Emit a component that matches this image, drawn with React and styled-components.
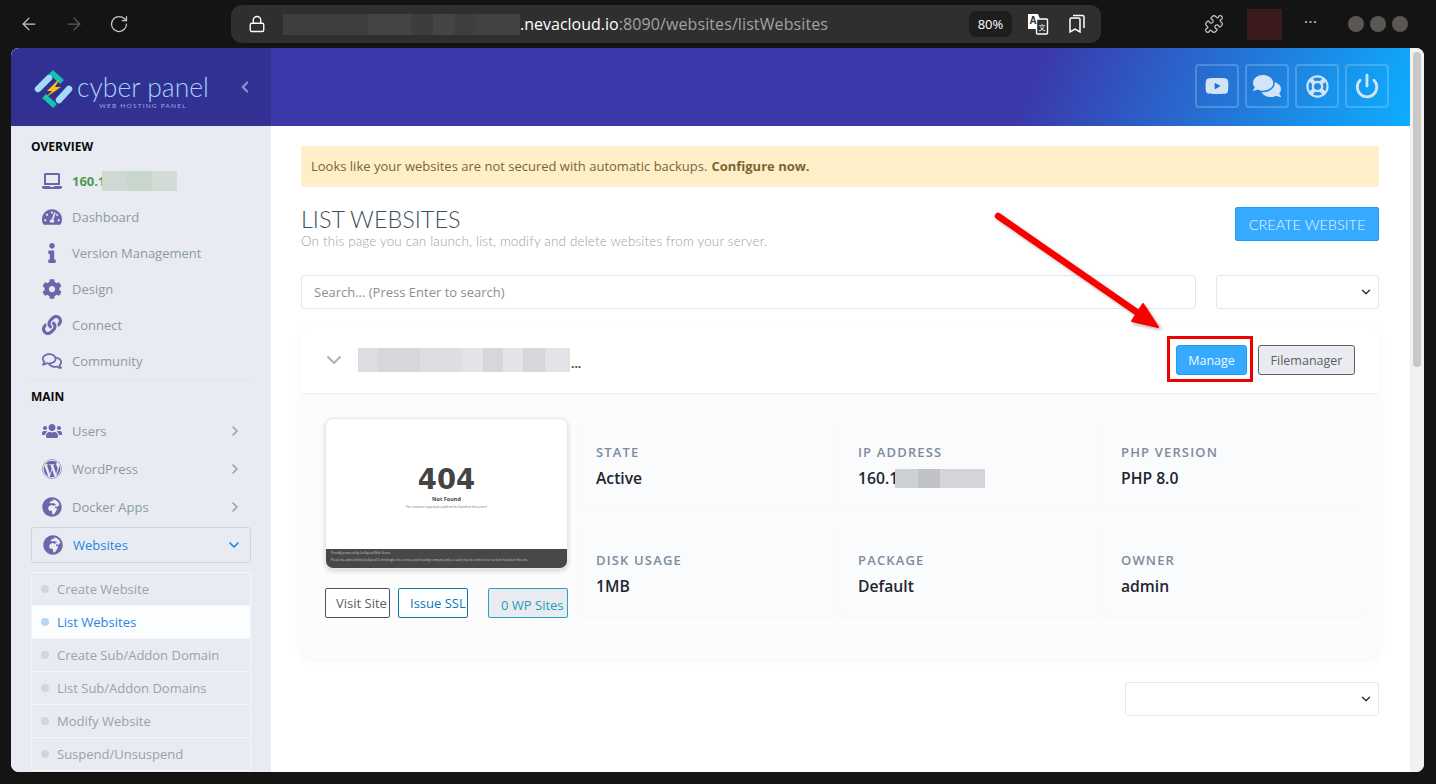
import React from "react";
import styled, { createGlobalStyle } from "styled-components";
import { ArrowLeft, ArrowRight, RotateCw, Lock, Puzzle, ChevronDown, ChevronRight, ChevronLeft, Power } from "lucide-react";
import {
  FaLaptop,
  FaTachometerAlt,
  FaInfo,
  FaCog,
  FaLink,
  FaRegComments,
  FaUsers,
  FaWordpress,
  FaGlobeAfrica,
  FaYoutube,
  FaComments,
  FaRegLifeRing,
} from "react-icons/fa";

const GlobalStyle = createGlobalStyle`
  html, body {
    margin: 0;
    padding: 0;
    height: 100%;
    background: #141414;
    overflow: hidden;
  }
  * { box-sizing: border-box; }
`;

const Screen = styled.div`
  position: relative;
  width: 1436px;
  height: 784px;
  background: #141414;
  font-family: "Open Sans", "Liberation Sans", sans-serif;
  overflow: hidden;
`;

/* browser chrome */
const Toolbar = styled.div`
  height: 48px;
  display: flex;
  align-items: center;
  padding: 0 24px 0 19px;
`;

const NavButton = styled.div`
  width: 20px;
  display: flex;
  justify-content: center;
  color: ${(p) => (p.$off ? "#5c5c5c" : "#c6c6c6")};
  margin-right: ${(p) => p.$gap || 0}px;
`;

const AddressBar = styled.div`
  width: 870px;
  height: 38px;
  margin-left: 102px;
  margin-right: 103px;
  flex-shrink: 0;
  border-radius: 11px;
  background: #2f2f2f;
  display: flex;
  align-items: center;
  padding: 0 15px 0 17px;
  color: #fff;
`;

const Url = styled.div`
  display: flex;
  align-items: center;
  margin-left: 17px;
  font-size: 16px;
  flex: 1;
  min-width: 0;
`;

const UrlDim = styled.span`
  color: #a3a3a3;
  letter-spacing: 0.1px;
`;

const Blur = styled.div`
  display: flex;
  flex-shrink: 0;
  height: ${(p) => p.$h}px;
  margin-left: ${(p) => p.$ml || 0}px;
`;

const BlurCell = styled.div`
  width: ${(p) => p.$w}px;
  background: ${(p) => p.$c};
`;

const Zoom = styled.div`
  width: 43px;
  height: 26px;
  border-radius: 7px;
  background: #1d1d1d;
  font-size: 13px;
  display: flex;
  align-items: center;
  justify-content: center;
  margin-right: 15px;
`;

const BarIcon = styled.svg`
  display: block;
  margin-right: ${(p) => p.$gap || 0}px;
`;

const ToolbarRight = styled.div`
  display: flex;
  align-items: center;
  color: #c6c6c6;
`;

const ProfileBlock = styled.div`
  width: 35px;
  height: 31px;
  background: #3a1a1a;
  margin: 0 21px 0 23px;
`;

const Dots = styled.div`
  width: 16px;
  text-align: center;
  font-size: 12px;
  letter-spacing: 1px;
  font-weight: 700;
  color: #bdbdbd;
  margin-right: 29px;
  transform: translateY(-3px);
`;

const Avatars = styled.div`
  display: flex;
  gap: 6px;
`;

const Avatar = styled.div`
  width: 16px;
  height: 16px;
  flex-shrink: 0;
  border-radius: 50%;
  background: #5b5754;
`;

/* page viewport */
const Viewport = styled.div`
  display: flex;
  width: 1413px;
  height: 724px;
  margin-left: 11px;
  border-radius: 8px;
  overflow: hidden;
  background: #fff;
`;

const Sidebar = styled.aside`
  width: 260px;
  flex-shrink: 0;
  background: #e9ebf2;
  overflow: hidden;
`;

const LogoBar = styled.div`
  height: 78px;
  background: #303193;
  display: flex;
  align-items: center;
  padding-left: 17px;
`;

const LogoMark = styled.svg`
  display: block;
  flex-shrink: 0;
  margin-top: 4px;
`;

const LogoText = styled.div`
  margin-left: -1px;
  color: #a6d2f6;
  font-family: "Lato", "Open Sans", sans-serif;
  font-weight: 300;
  font-size: 26.5px;
  line-height: 29px;
  display: flex;
  flex-direction: column;
  align-items: center;
  padding-top: 8px;
`;

const LogoSub = styled.span`
  font-size: 6.5px;
  line-height: 8px;
  letter-spacing: 1.2px;
  font-weight: 400;
  color: #9ea7dc;
`;

const Collapse = styled.div`
  margin-left: auto;
  margin-right: 17px;
  color: #8d8fcb;
  display: flex;
`;

const Nav = styled.nav`
  padding: 13px 20px 0;
`;

const NavHeading = styled.div`
  font-size: 12px;
  font-weight: 700;
  color: #0a0a0a;
  line-height: 16px;
  margin-bottom: ${(p) => p.$gap || 0}px;
`;

const NavItem = styled.div`
  height: ${(p) => p.$h || 36}px;
  display: flex;
  align-items: center;
  font-size: 13px;
  color: ${(p) => p.$color || "#8b9aa8"};
  font-weight: ${(p) => (p.$bold ? 700 : 400)};
  padding-right: 8px;
`;

const NavIcon = styled.span`
  width: 41px;
  flex-shrink: 0;
  display: flex;
  justify-content: center;
  color: #6a67ab;
  font-size: 20px;
`;

const NavArrow = styled.span`
  margin-left: auto;
  display: flex;
  color: ${(p) => p.$color || "#8b9aa8"};
`;

const NavDivider = styled.div`
  height: 1px;
  background: #dfe6f1;
  margin: 1px 0 8px;
`;

const ActiveItem = styled(NavItem)`
  height: 36px;
  margin-top: 1px;
  border: 1px solid #cdd5de;
  border-radius: 3px;
  color: #2486e3;
`;

const SubMenu = styled.div`
  margin-top: 9px;
  border: 1px solid #f5f6f9;
  border-bottom: none;
  border-radius: 3px;
`;

const SubItem = styled.div`
  height: 33px;
  display: flex;
  align-items: center;
  gap: 8px;
  padding-left: 9px;
  font-size: 13px;
  color: ${(p) => (p.$active ? "#2486e3" : "#97a3ae")};
  background: ${(p) => (p.$active ? "#fcfdff" : "transparent")};
  border-bottom: 1px solid #f5f6f9;
`;

const SubDot = styled.span`
  width: 8px;
  height: 8px;
  border-radius: 50%;
  background: ${(p) => (p.$active ? "#b4d8f8" : "#d0d6de")};
`;

const Content = styled.div`
  flex: 1;
  min-width: 0;
  display: flex;
  flex-direction: column;
`;

const TopBar = styled.div`
  height: 78px;
  flex-shrink: 0;
  background: linear-gradient(112deg, #3b38ab 0%, #3b38ab 66%, #0daeff 100%);
  display: flex;
  justify-content: flex-end;
  align-items: center;
  gap: 6px;
  padding: 0 21px 2px 0;
`;

const TopButton = styled.div`
  width: 44px;
  height: 44px;
  border: 2px solid rgba(255, 255, 255, 0.2);
  border-radius: 4px;
  display: flex;
  align-items: center;
  justify-content: center;
  color: #d3e4f8;
  font-size: ${(p) => p.$size}px;
`;

const Main = styled.main`
  flex: 1;
  padding: 20px 31px 0 30px;
  background: #fff;
`;

const Alert = styled.div`
  height: 41px;
  background: #ffefc8;
  border-radius: 3px;
  color: #7b6532;
  font-size: 13px;
  display: flex;
  align-items: center;
  padding: 0 0 1px 10px;
  gap: 4px;
`;

const AlertLink = styled.b`
  font-weight: 700;
`;

const TitleRow = styled.div`
  display: flex;
  justify-content: space-between;
  margin-top: 20px;
`;

const Title = styled.h1`
  margin: 0;
  font-family: "Lato", "Open Sans", sans-serif;
  font-weight: 300;
  font-size: 23.4px;
  line-height: 24px;
  color: #3f4f60;
`;

const Subtitle = styled.p`
  margin: 2px 0 0;
  font-family: "Lato", "Open Sans", sans-serif;
  font-weight: 300;
  font-size: 13.4px;
  letter-spacing: 0.18px;
  line-height: 17px;
  color: #989fa7;
`;

const CreateButton = styled.button`
  width: 144px;
  height: 34px;
  background: #36aaff;
  border: 1px solid #1f9df5;
  border-radius: 2px;
  color: #eaf6ff;
  font-family: "Lato", "Open Sans", sans-serif;
  font-weight: 300;
  font-size: 14.5px;
`;

const SearchRow = styled.div`
  display: flex;
  gap: 20px;
  margin-top: 25px;
`;

const SearchBox = styled.div`
  flex: 1;
  height: 34px;
  border: 1px solid #dfe7f2;
  border-radius: 3px;
  display: flex;
  align-items: center;
  padding-left: 12px;
  font-size: 13px;
  color: #8a8f95;
`;

const SelectBox = styled.div`
  width: ${(p) => p.$w}px;
  height: 34px;
  border: 1px solid #dfe7f2;
  border-radius: 3px;
  background: #fff;
  display: flex;
  align-items: center;
  justify-content: flex-end;
  padding-right: 5px;
  color: #333;
`;

const Card = styled.section`
  margin-top: 18px;
  height: 331px;
  background: #fcfcfd;
  border-radius: 10px;
  box-shadow: 0 2px 10px rgba(30, 50, 90, 0.05);
  overflow: hidden;
`;

const CardHeader = styled.div`
  height: 67px;
  display: flex;
  align-items: center;
  background: #fff;
  border-bottom: 1px solid #eaeef4;
  padding: 0 24px 0 21px;
`;

const Toggle = styled.span`
  display: flex;
  color: #aeb1b6;
  margin-right: 12px;
`;

const Ellipsis = styled.span`
  font-size: 12px;
  font-weight: 700;
  color: #444;
  margin-left: 1px;
  transform: translateY(3px);
`;

const HeaderActions = styled.div`
  margin-left: auto;
  display: flex;
  gap: 11px;
`;

const SmallButton = styled.button`
  height: 30px;
  width: ${(p) => p.$w}px;
  border-radius: 3px;
  font-family: "Open Sans", sans-serif;
  font-size: 12.5px;
  padding: 0;
  background: ${(p) => (p.$primary ? "#36aaff" : "#e9ebf1")};
  border: 1px solid ${(p) => (p.$primary ? "#1f9df5" : "#5b6066")};
  color: ${(p) => (p.$primary ? "#eef8ff" : "#595f66")};
`;

const CardBody = styled.div`
  display: flex;
  padding: 24px 13px 0 24px;
  gap: 9px;
`;

const PreviewCol = styled.div`
  width: 243px;
  flex-shrink: 0;
`;

const Preview = styled.div`
  height: 151px;
  background: #fff;
  border-radius: 8px;
  border: 1px solid #e8e8e8;
  box-shadow: 0 2px 5px rgba(0, 0, 0, 0.16);
  display: flex;
  flex-direction: column;
  overflow: hidden;
`;

const PreviewMain = styled.div`
  flex: 1;
  display: flex;
  flex-direction: column;
  align-items: center;
  justify-content: center;
  color: #444;
  padding-top: 6px;
`;

const Big404 = styled.div`
  font-family: "DejaVu Sans", sans-serif;
  font-weight: 700;
  font-size: 27.5px;
  line-height: 30px;
`;

const NotFound = styled.div`
  font-size: 5.5px;
  font-weight: 700;
  line-height: 10px;
`;

const Tiny = styled.div`
  font-size: 3px;
  line-height: 7px;
  color: ${(p) => p.$color || "#666"};
`;

const PreviewFoot = styled.div`
  height: 19px;
  background: #484848;
  padding: 1px 5px;
`;

const PreviewActions = styled.div`
  display: flex;
  margin-top: 19px;
  align-items: flex-start;
`;

const OutlineButton = styled.button`
  height: 30px;
  width: ${(p) => p.$w}px;
  margin-left: ${(p) => p.$ml || 0}px;
  border-radius: 2px;
  background: ${(p) => p.$bg || "#fff"};
  border: 1px solid ${(p) => p.$c};
  color: ${(p) => p.$text || p.$c};
  font-family: "Open Sans", sans-serif;
  font-size: 13px;
  text-align: left;
  padding: ${(p) => p.$pad};
  white-space: nowrap;
`;

const StatGrid = styled.div`
  flex: 1;
  display: grid;
  grid-template-columns: 261px 262px 263px;
  grid-template-rows: 90px 90px;
  column-gap: 1px;
  row-gap: 18px;
`;

const Stat = styled.div`
  background: #fafbfd;
  border-radius: 5px;
  box-shadow: 0 1px 3px rgba(30, 50, 90, 0.03);
  padding: 26px 18px 0 19px;
`;

const StatLabel = styled.div`
  font-size: 13px;
  font-weight: 600;
  letter-spacing: 1.15px;
  line-height: 16px;
  color: #7f8b9b;
`;

const StatValue = styled.div`
  display: flex;
  align-items: center;
  margin-top: 8px;
  font-size: 15.7px;
  font-weight: 600;
  line-height: 20px;
  color: #23262f;
`;

const BottomRow = styled.div`
  display: flex;
  justify-content: flex-end;
  margin-top: 24px;
`;

const Scrollbar = styled.div`
  width: 14px;
  flex-shrink: 0;
  background: #f1f1f1;
  padding: 4px 3px;
`;

const Thumb = styled.div`
  height: 315px;
  border-radius: 4px;
  background: #c8c8c8;
`;

/* annotation drawn over the screenshot */
const RedBox = styled.div`
  position: absolute;
  left: 1167px;
  top: 336px;
  width: 86px;
  height: 46px;
  border: 3px solid #f00000;
`;

const ArrowLayer = styled.svg`
  position: absolute;
  left: 980px;
  top: 200px;
  overflow: visible;
`;

const Cells = ({ cells, h, ml }) => (
  <Blur $h={h} $ml={ml}>
    {cells.map(([w, c], i) => (
      <BlurCell key={i} $w={w} $c={c} />
    ))}
  </Blur>
);

const Logo = () => (
  <LogoMark width="50" height="50" viewBox="0 0 50 50" fill="none">
    <path d="M23 8 L34 18" stroke="#13c4b0" strokeWidth="5.5" />
    <path d="M16 32 L27 42" stroke="#13c4b0" strokeWidth="5.5" />
    <path d="M10 25 L21 14" stroke="#a6d8f8" strokeWidth="6.5" strokeLinecap="round" />
    <path d="M41 25 L31 36" stroke="#a6d8f8" strokeWidth="6.5" strokeLinecap="round" />
    <path d="M30 16 L19 27 L24 27 L17 34 L33 23 L27 23 L31 16 Z" fill="#ffc20e" />
  </LogoMark>
);

const TranslateIcon = () => (
  <BarIcon width="22" height="22" viewBox="0 0 22 22" $gap={19}>
    <path d="M1 1h10l2 5v10H1z" fill="#fff" />
    <rect x="9.5" y="6" width="11" height="15" rx="1" fill="#2f2f2f" stroke="#fff" strokeWidth="1.4" />
    <text x="2.5" y="11" fontSize="10" fontWeight="700" fill="#2f2f2f" fontFamily="Liberation Sans">A</text>
    <text x="11.5" y="17" fontSize="7" fill="#fff" fontFamily="Noto Sans CJK SC">文</text>
  </BarIcon>
);

const CollectionsIcon = () => (
  <BarIcon width="18" height="20" viewBox="0 0 18 20" fill="none" stroke="#fff" strokeWidth="1.5">
    <path d="M2 5.5a1.5 1.5 0 0 1 1.5-1.5h7a1.5 1.5 0 0 1 1.5 1.5V18l-5-3-5 3z" />
    <path d="M5 1.5h9.5a1.5 1.5 0 0 1 1.5 1.5v11" />
  </BarIcon>
);

const overviewItems = [
  [FaTachometerAlt, "Dashboard"],
  [FaInfo, "Version Management"],
  [FaCog, "Design"],
  [FaLink, "Connect"],
  [FaRegComments, "Community"],
];

const mainItems = [
  [FaUsers, "Users"],
  [FaWordpress, "WordPress"],
  [FaGlobeAfrica, "Docker Apps"],
];

const subItems = [
  "Create Website",
  "List Websites",
  "Create Sub/Addon Domain",
  "List Sub/Addon Domains",
  "Modify Website",
  "Suspend/Unsuspend",
];

const stats = [
  ["STATE", "Active"],
  ["IP ADDRESS", "160.1", [[23, "#cdd0d4"], [22, "#c0c2c7"], [45, "#d3d5d9"]]],
  ["PHP VERSION", "PHP 8.0"],
  ["DISK USAGE", "1MB"],
  ["PACKAGE", "Default"],
  ["OWNER", "admin"],
];

export default function App() {
  return (
    <Screen>
      <GlobalStyle />
      <Toolbar>
        <NavButton $gap={25}><ArrowLeft size={20} strokeWidth={1.5} /></NavButton>
        <NavButton $off $gap={25}><ArrowRight size={20} strokeWidth={1.5} /></NavButton>
        <NavButton><RotateCw size={20} strokeWidth={1.5} /></NavButton>
        <AddressBar>
          <Lock size={18} strokeWidth={1.8} />
          <Url>
            <Cells h={21} cells={[[85, "#3f3f3f"], [43, "#444"], [22, "#3d3d3d"], [21, "#454545"], [21, "#3f3f3f"], [45, "#424242"]]} />
            <span>.nevacloud.io</span>
            <UrlDim>:8090/websites/listWebsites</UrlDim>
          </Url>
          <Zoom>80%</Zoom>
          <TranslateIcon />
          <CollectionsIcon />
        </AddressBar>
        <ToolbarRight>
          <Puzzle size={20} strokeWidth={1.5} />
          <ProfileBlock />
          <Dots>···</Dots>
          <Avatars>
            <Avatar />
            <Avatar />
            <Avatar />
          </Avatars>
        </ToolbarRight>
      </Toolbar>

      <Viewport>
        <Sidebar>
          <LogoBar>
            <Logo />
            <LogoText>
              cyber panel
              <LogoSub>WEB HOSTING PANEL</LogoSub>
            </LogoText>
            <Collapse><ChevronLeft size={18} strokeWidth={3} /></Collapse>
          </LogoBar>
          <Nav>
            <NavHeading $gap={8}>OVERVIEW</NavHeading>
            <NavItem $color="#4c9a52" $bold>
              <NavIcon><FaLaptop /></NavIcon>
              160.1
              <Cells h={20} ml={-3} cells={[[25, "#cdd9d2"], [25, "#c8d6cd"], [25, "#d0dcd5"]]} />
            </NavItem>
            {overviewItems.map(([Icon, label]) => (
              <NavItem key={label}>
                <NavIcon><Icon /></NavIcon>
                {label}
              </NavItem>
            ))}
            <NavDivider />
            <NavHeading $gap={7}>MAIN</NavHeading>
            {mainItems.map(([Icon, label]) => (
              <NavItem key={label} $h={38}>
                <NavIcon><Icon /></NavIcon>
                {label}
                <NavArrow><ChevronRight size={16} strokeWidth={2} /></NavArrow>
              </NavItem>
            ))}
            <ActiveItem>
              <NavIcon><FaGlobeAfrica /></NavIcon>
              Websites
              <NavArrow $color="#2486e3"><ChevronDown size={16} strokeWidth={2.5} /></NavArrow>
            </ActiveItem>
            <SubMenu>
              {subItems.map((label) => (
                <SubItem key={label} $active={label === "List Websites"}>
                  <SubDot $active={label === "List Websites"} />
                  {label}
                </SubItem>
              ))}
            </SubMenu>
          </Nav>
        </Sidebar>

        <Content>
          <TopBar>
            <TopButton $size={24}><FaYoutube /></TopButton>
            <TopButton $size={28}><FaComments /></TopButton>
            <TopButton $size={23}><FaRegLifeRing /></TopButton>
            <TopButton $size={26}><Power size={26} strokeWidth={2.6} /></TopButton>
          </TopBar>
          <Main>
            <Alert>
              Looks like your websites are not secured with automatic backups.
              <AlertLink>Configure now.</AlertLink>
            </Alert>
            <TitleRow>
              <div>
                <Title>LIST WEBSITES</Title>
                <Subtitle>On this page you can launch, list, modify and delete websites from your server.</Subtitle>
              </div>
              <CreateButton>CREATE WEBSITE</CreateButton>
            </TitleRow>
            <SearchRow>
              <SearchBox>Search... (Press Enter to search)</SearchBox>
              <SelectBox $w={163}><ChevronDown size={14} strokeWidth={2.5} /></SelectBox>
            </SearchRow>
            <Card>
              <CardHeader>
                <Toggle><ChevronDown size={24} strokeWidth={2} /></Toggle>
                <Cells h={24} cells={[[20, "#dcdde0"], [42, "#d6d7da"], [42, "#dddee1"], [21, "#e2e3e6"], [20, "#d6d7da"], [20, "#e2e3e6"], [22, "#d6d7da"], [25, "#e2e3e6"]]} />
                <Ellipsis>...</Ellipsis>
                <HeaderActions>
                  <SmallButton $primary $w={71}>Manage</SmallButton>
                  <SmallButton $w={97}>Filemanager</SmallButton>
                </HeaderActions>
              </CardHeader>
              <CardBody>
                <PreviewCol>
                  <Preview>
                    <PreviewMain>
                      <Big404>404</Big404>
                      <NotFound>Not Found</NotFound>
                      <Tiny>The resource requested could not be found on this server!</Tiny>
                    </PreviewMain>
                    <PreviewFoot>
                      <Tiny $color="#ccc">Proudly powered by LiteSpeed Web Server</Tiny>
                      <Tiny $color="#ccc">Please be advised that LiteSpeed Technologies Inc. is not a web hosting company and, as such, has no control over content found on this site.</Tiny>
                    </PreviewFoot>
                  </Preview>
                  <PreviewActions>
                    <OutlineButton $w={65} $c="#4d5560" $text="#596068" $pad="0 0 0 10px">Visit Site</OutlineButton>
                    <OutlineButton $w={70} $ml={8} $c="#0a78ad" $pad="0 0 0 11px">Issue SSL</OutlineButton>
                    <OutlineButton $w={80} $ml={20} $c="#22a5bd" $bg="#e9ebf1" $text="#22a0b8" $pad="4px 0 0 12px">0 WP Sites</OutlineButton>
                  </PreviewActions>
                </PreviewCol>
                <StatGrid>
                  {stats.map(([label, value, cells]) => (
                    <Stat key={label}>
                      <StatLabel>{label}</StatLabel>
                      <StatValue>
                        {value}
                        {cells && <Cells h={19} ml={-3} cells={cells} />}
                      </StatValue>
                    </Stat>
                  ))}
                </StatGrid>
              </CardBody>
            </Card>
            <BottomRow>
              <SelectBox $w={254}><ChevronDown size={14} strokeWidth={2.5} /></SelectBox>
            </BottomRow>
          </Main>
        </Content>

        <Scrollbar><Thumb /></Scrollbar>
      </Viewport>

      <RedBox />
      <ArrowLayer width="190" height="140" viewBox="0 0 190 140">
        <defs>
          <filter id="arrowShadow" x="-20%" y="-20%" width="140%" height="140%">
            <feDropShadow dx="2" dy="2" stdDeviation="1.5" floodColor="#000" floodOpacity="0.3" />
          </filter>
        </defs>
        <g filter="url(#arrowShadow)">
          <path d="M18 16 L158 113" stroke="#f60000" strokeWidth="6.5" strokeLinecap="round" />
          <path d="M178 127 L152 121 L163 104 Z" fill="#f60000" stroke="#f60000" strokeWidth="2" strokeLinejoin="round" />
        </g>
      </ArrowLayer>
    </Screen>
  );
}
